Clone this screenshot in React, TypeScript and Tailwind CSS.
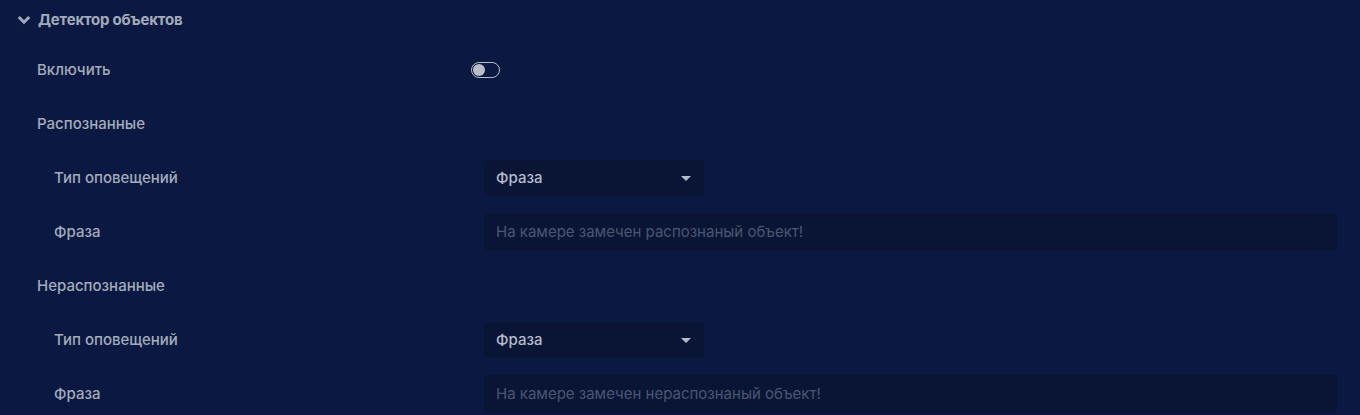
import React from "react";

const font = { fontFamily: "Inter, 'Noto Sans', sans-serif" };

function Label({ text, indent }: { text: string; indent: 1 | 2 }) {
  return (
    <div className={(indent === 1 ? "pl-[37px] w-[484px]" : "pl-[54px] w-[484px]") + " shrink-0 text-[15px] font-medium text-[#a3abbb]"}>
      {text}
    </div>
  );
}

function SelectBox() {
  return (
    <div className="w-[220px] h-[36px] rounded-[4px] bg-[#0a1535] flex items-center justify-between pl-[12px] pr-[13px] text-[15px] font-medium text-[#b4bccb]">
      <span>Фраза</span>
      <svg width="10" height="5" viewBox="0 0 10 5"><path d="M0 0h10L5 5z" fill="#b4bccb" /></svg>
    </div>
  );
}

function InputBox({ text }: { text: string }) {
  return (
    <div className="flex-1 h-[38px] rounded-[4px] bg-[#0a1535] flex items-center pl-[12px] text-[15px] text-[#4b5573]">
      {text}
    </div>
  );
}

export default function App() {
  return (
    <div className="w-[1360px] h-[415px] bg-[#0b1942] overflow-hidden pr-[23px]" style={font}>
      <div className="h-[40px] flex items-center pl-[17px] gap-[7px]">
        <svg width="14" height="10" viewBox="0 0 14 10"><path d="M1.8 2l5.2 5.2L12.2 2" stroke="#a3abbb" strokeWidth="3" fill="none" /></svg>
        <span className="text-[15px] font-bold text-[#a3abbb] tracking-[-0.2px]">Детектор объектов</span>
      </div>
      <div className="flex flex-col mt-[3px]">
        <div className="h-[54px] flex items-center">
          <div className="pl-[37px] w-[471px] shrink-0 text-[15px] font-medium text-[#a3abbb]">Включить</div>
          <div className="w-[29px] h-[16px] rounded-full border border-[#b8bcc6] flex items-center pl-[1px]">
            <div className="w-[12px] h-[12px] rounded-full bg-[#b8bdc7]" />
          </div>
        </div>
        <div className="h-[54px] flex items-center"><Label text="Распознанные" indent={1} /></div>
        <div className="h-[54px] flex items-center"><Label text="Тип оповещений" indent={2} /><SelectBox /></div>
        <div className="h-[54px] flex items-center"><Label text="Фраза" indent={2} /><InputBox text="На камере замечен распознаный объект!" /></div>
        <div className="h-[54px] flex items-center"><Label text="Нераспознанные" indent={1} /></div>
        <div className="h-[54px] flex items-center"><Label text="Тип оповещений" indent={2} /><SelectBox /></div>
        <div className="h-[54px] flex items-center"><Label text="Фраза" indent={2} /><InputBox text="На камере замечен нераспознаный объект!" /></div>
      </div>
    </div>
  );
}
